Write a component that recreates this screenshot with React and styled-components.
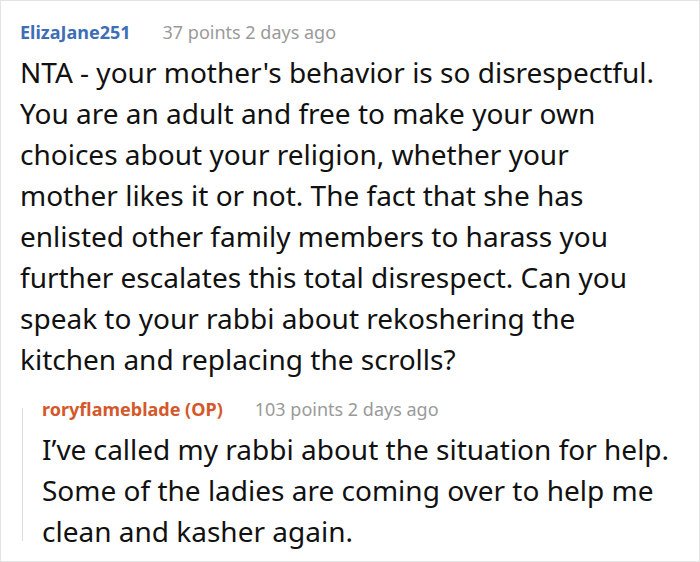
import styled, { createGlobalStyle } from "styled-components";

const Global = createGlobalStyle`
  html, body {
    margin: 0;
    padding: 0;
    background: #fff;
  }
  body {
    font-family: "Noto Sans", "Open Sans", sans-serif;
  }
`;

const Frame = styled.div`
  box-sizing: border-box;
  width: 700px;
  height: 562px;
  border: 1px solid #e3e3e3;
  padding: 16px 20px 0 19px;
  overflow: hidden;
`;

const Comment = styled.div`
  display: flex;
  flex-direction: column;
`;

const Header = styled.div`
  display: flex;
  align-items: baseline;
  gap: 32px;
  font-size: 18px;
  line-height: 30px;
  margin-bottom: 5px;
`;

const Author = styled.span`
  font-weight: 700;
  color: ${(p) => p.$color};
`;

const Meta = styled.span`
  color: #9a9a9a;
`;

const Body = styled.p`
  margin: 0;
  max-width: ${(p) => p.$max || "none"};
  font-size: 28px;
  line-height: 41px;
  color: #111;
`;

const Reply = styled.div`
  position: relative;
  margin: 14px 0 0 2px;
  padding-left: 20px;

  &::before {
    content: "";
    position: absolute;
    left: 0;
    top: 14px;
    bottom: 11px;
    width: 1px;
    background: #dcdcdc;
  }
`;

export default function App() {
  return (
    <>
      <Global />
      <Frame>
        <Comment>
          <Header>
            <Author $color="#3e6eb6">ElizaJane251</Author>
            <Meta>37 points 2 days ago</Meta>
          </Header>
          <Body $max="649px">
            NTA - your mother's behavior is so disrespectful. You are an adult
            and free to make your own choices about your religion, whether your
            mother likes it or not. The fact that she has enlisted other family
            members to harass you further escalates this total disrespect. Can
            you speak to your rabbi about rekoshering the kitchen and replacing
            the scrolls?
          </Body>
          <Reply>
            <Header>
              <Author $color="#d4592a">roryflameblade (OP)</Author>
              <Meta>103 points 2 days ago</Meta>
            </Header>
            <Body>
              I’ve called my rabbi about the situation for help. Some of the
              ladies are coming over to help me clean and kasher again.
            </Body>
          </Reply>
        </Comment>
      </Frame>
    </>
  );
}
